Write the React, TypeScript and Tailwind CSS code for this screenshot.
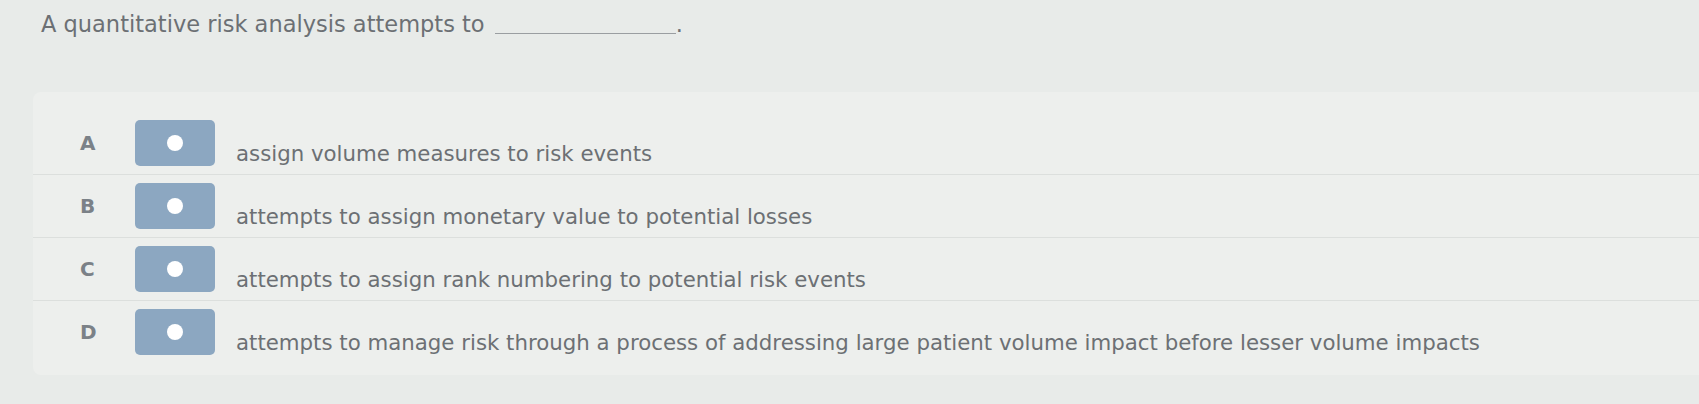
import React from "react";

const options = [
  { key: "A", text: "assign volume measures to risk events" },
  { key: "B", text: "attempts to assign monetary value to potential losses" },
  { key: "C", text: "attempts to assign rank numbering to potential risk events" },
  {
    key: "D",
    text: "attempts to manage risk through a process of addressing large patient volume impact before lesser volume impacts",
  },
];

export default function App() {
  return (
    <div
      className="h-[404px] w-[1699px] overflow-hidden bg-[#e8ebe9] text-[#6c7074]"
      style={{ fontFamily: '"DejaVu Sans", Verdana, sans-serif' }}
    >
      {/* Frage */}
      <div className="flex items-end pl-[41px] pt-[8px] text-[22.5px] leading-[32px]">
        <span>A quantitative risk analysis attempts to</span>
        <span className="mb-[6px] ml-[10px] inline-block w-[181px] border-b border-[#9a9ea1]" />
        <span>.</span>
      </div>

      {/* Antworten */}
      <div className="ml-[33px] mt-[52px] rounded-l-lg bg-[#edefed] pb-[12px] pt-[19px]">
        {options.map((o, i) => (
          <div
            key={o.key}
            className={
              i === 0
                ? "flex h-[63px] items-center"
                : "flex h-[63px] items-center border-t border-[#dcdfdd]"
            }
          >
            <span className="w-[102px] pl-[47px] text-[20px] font-bold text-[#7b8187]">
              {o.key}
            </span>
            <button className="flex h-[46px] w-[80px] items-center justify-center rounded-[5px] bg-[#8ca7c1]">
              <span className="h-[16px] w-[16px] rounded-full bg-white" />
            </button>
            <span className="ml-[21px] pt-[22px] text-[21.3px] leading-[28px]">{o.text}</span>
          </div>
        ))}
      </div>
    </div>
  );
}
